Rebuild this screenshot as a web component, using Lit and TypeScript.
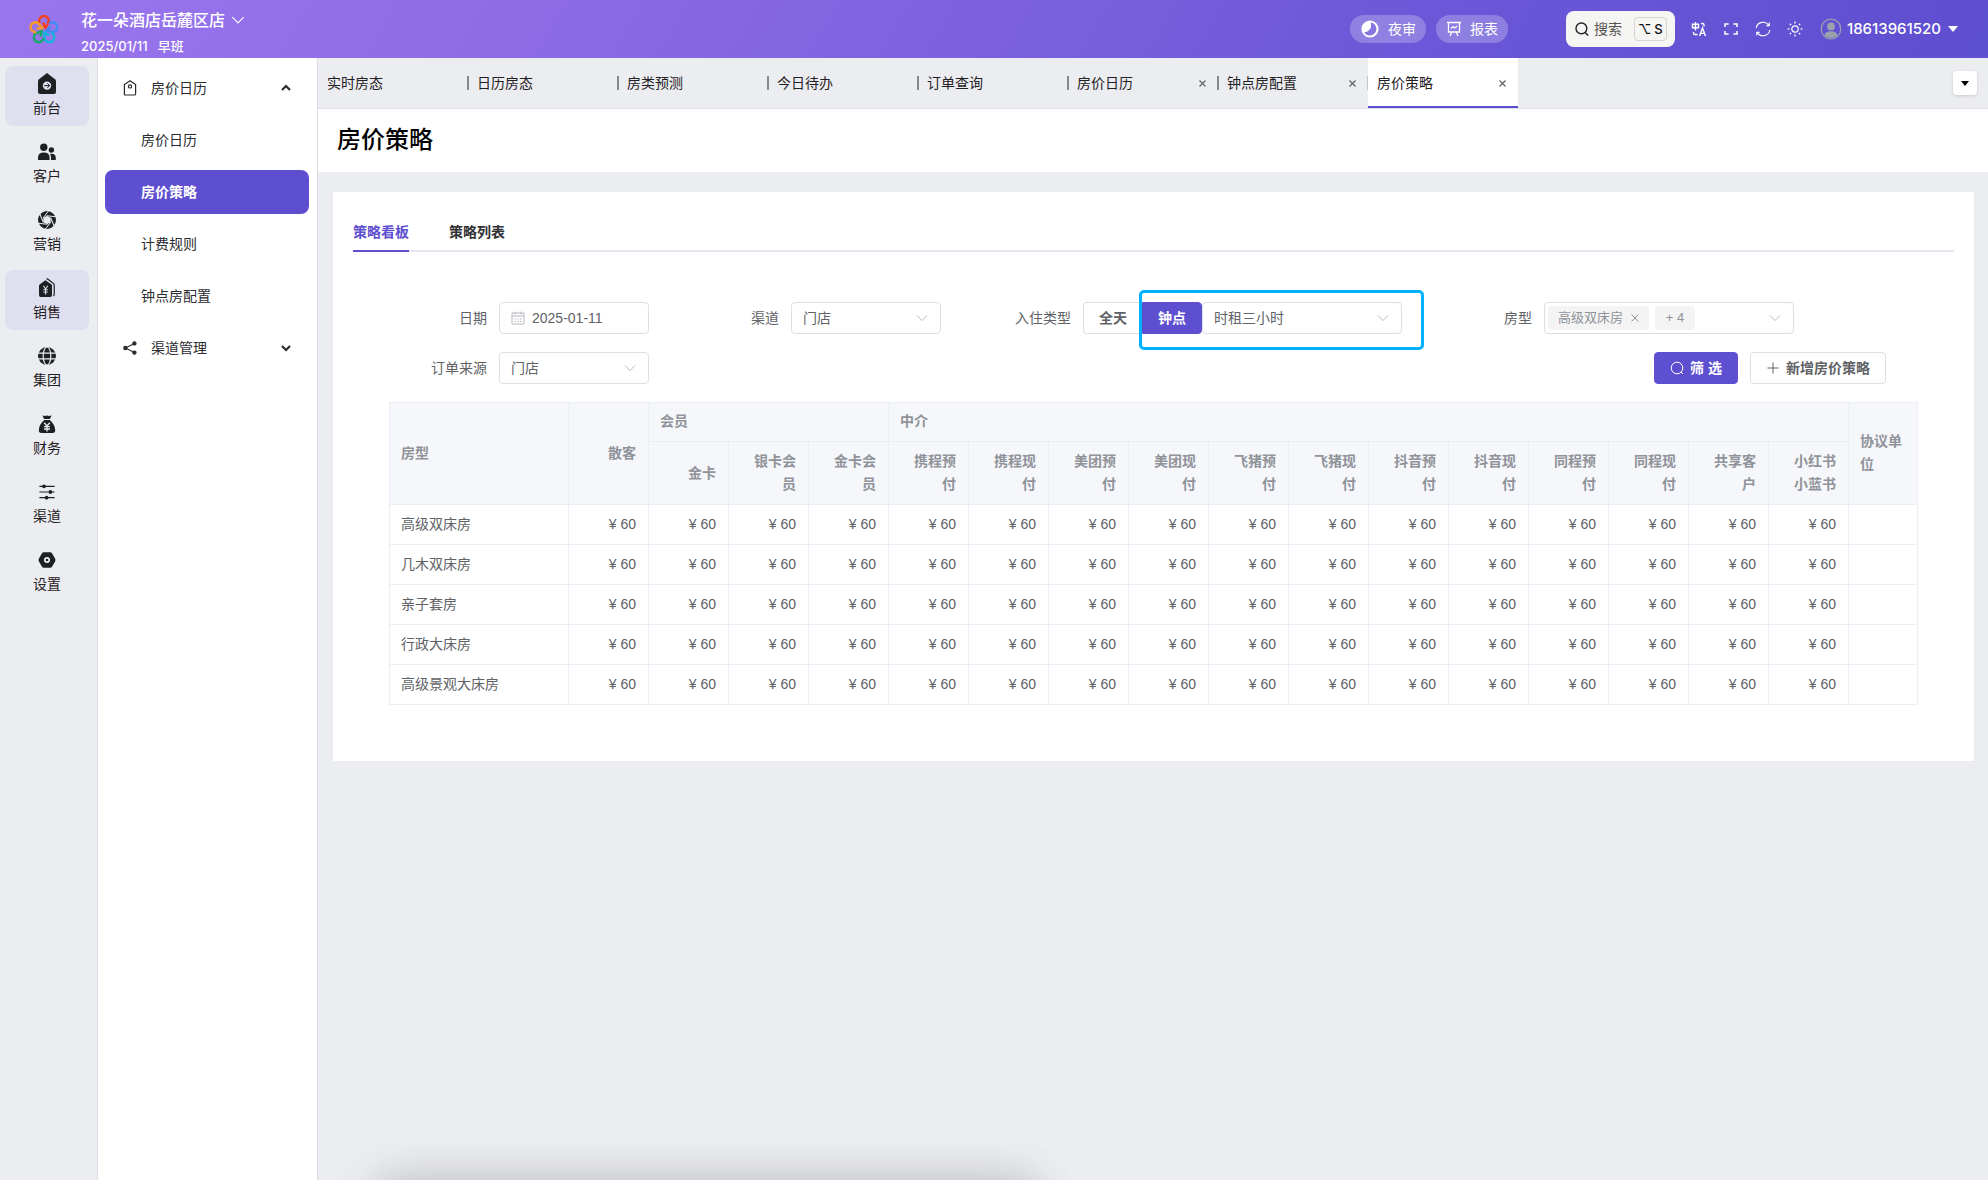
import { LitElement, html, svg, css, nothing } from "lit";
import { customElement, state } from "lit/decorators.js";
import { classMap } from "lit/directives/class-map.js";

const icon = (w: number, h: number, body: unknown, cls = "") => html`<svg
  class=${cls} width=${w} height=${h} viewBox="0 0 ${w} ${h}" fill="none" aria-hidden="true">${body}</svg>`;

const petals = ["#f4401f", "#3f8cf5", "#12b5d8", "#17a86b", "#f7982a"];
const logo = icon(32, 32, petals.map((color, i) => svg`
  <g transform="rotate(${i * 72} 16 17)">
    <path d="M11.6 10.2 A4.9 4.9 0 1 1 20.8 8.8 L17.4 15 L14.9 9.6" stroke=${color} stroke-width="2.5" stroke-linejoin="round"/>
  </g>`), "logo");

const chevron = (size: number, cls = "chevron") => html`<svg class=${cls} width=${size} height=${size}
  viewBox="0 0 14 14" fill="none" aria-hidden="true"><path d="M2 4.5 7 9.5 12 4.5" stroke="currentColor"/></svg>`;

const railIcons: Record<string, unknown> = {
  front: icon(18, 22, svg`
    <path d="M9 0 17 6.2Q18 7 18 8.2V19Q18 21 16 21H2Q0 21 0 19V8.2Q0 7 1 6.2Z" fill="currentColor"/>
    <circle cx="9" cy="12.6" r="4.2" fill="#e0dfef"/>
    <path d="M6.2 12.6h5.4M9.4 10.400l2.2 2.2-2.2 2.2" stroke="currentColor" stroke-width="1"/>`),
  guest: icon(18, 22, svg`
    <circle cx="5.8" cy="6.2" r="3.7" fill="currentColor"/>
    <path d="M0 19v-2.4Q0 11.4 5.8 11.4t5.8 5.2V19Z" fill="currentColor"/>
    <circle cx="13.4" cy="9" r="2.7" fill="currentColor"/>
    <path d="M13 19v-2.6q0-2-1-3.5Q17.8 12.2 17.8 17v2Z" fill="currentColor"/>`),
  promo: icon(18, 22, svg`
    <circle cx="9" cy="11" r="6.3" stroke="currentColor" stroke-width="5.4"/>
    ${[0, 60, 120, 180, 240, 300].map((a) => svg`<path d="M5 9.2 10.8 1.6" transform="rotate(${a} 9 11)" stroke="#ecedf1" stroke-width="1"/>`)}
    <path d="m9 7 3.4 2v4L9 15l-3.4-2V9Z" fill="#ecedf1"/>`),
  sales: icon(18, 22, svg`
    <path d="M7.4 3.2 13.6 7.6Q14 8 14 8.8V18Q14 20 12.4 20H2.8Q1 20 1 18V8.8Q1 8 1.6 7.4Z" fill="currentColor"/>
    <path d="M8.6 2.2 9.6 2l6 4.6q.6.5.6 1.4v9q0 1.6-1 2" stroke="currentColor" stroke-width="1.2"/>
    <path d="M5.4 8.8 7.6 12l2.2-3.2M7.6 12v5.4M5.4 12.8h4.4M5.4 15h4.4" stroke="#e0dfef" stroke-width="1.1"/>`),
  group: icon(18, 22, svg`
    <circle cx="9" cy="11" r="9" fill="currentColor"/>
    <path d="M0 8.2h18M0 13.8h18" stroke="#ecedf1" stroke-width="1.2"/>
    <ellipse cx="9" cy="11" rx="3.8" ry="9" stroke="#ecedf1" stroke-width="1.2"/>`),
  finance: icon(18, 22, svg`
    <path d="M4.4 2.2Q6.4 3.6 9 2.6q2.6 1 4.6-.4L12 6H6Z" fill="currentColor"/>
    <path d="M6.2 7h5.6Q16.8 11.4 17.2 17q.2 3-2.6 3H3.4Q.6 20 .8 17 1.2 11.4 6.2 7Z" fill="currentColor"/>
    <path d="M6.2 9.8 9 13l2.8-3.2M9 13v5.4M6 13.6h6M6 16h6" stroke="#ecedf1" stroke-width="1.3"/>`),
  channel: icon(18, 22, svg`
    <path d="M1.4 5.3h15.2M1.4 11h15.2M1.4 16.7h15.2" stroke="currentColor" stroke-width="1.2"/>
    <circle cx="6" cy="5.3" r="1.9" fill="currentColor"/><circle cx="12.4" cy="11" r="1.9" fill="currentColor"/>
    <circle cx="8.6" cy="16.7" r="1.9" fill="currentColor"/>`),
  settings: icon(18, 22, svg`
    <path d="M5.6 3.2h6.8q1 0 1.6 1L17.2 9.8q.6 1.200 0 2.400L14 17.800q-.6 1-1.600 1H5.600q-1 0-1.600-1L.8 12.200Q.2 11 .8 9.800L4 4.200q.6-1 1.600-1Z" fill="currentColor"/>
    <circle cx="9" cy="11" r="2.2" stroke="#ecedf1" stroke-width="1.7"/>`),
};

const rail = [
  ["front", "前台"], ["guest", "客户"], ["promo", "营销"], ["sales", "销售"],
  ["group", "集团"], ["finance", "财务"], ["channel", "渠道"], ["settings", "设置"],
];

const pageTabs = ["实时房态", "日历房态", "房类预测", "今日待办", "订单查询", "房价日历", "钟点房配置", "房价策略"];

const memberLevels = ["金卡", "银卡会员", "金卡会员"];
const agencies = ["携程预付", "携程现付", "美团预付", "美团现付", "飞猪预付", "飞猪现付",
  "抖音预付", "抖音现付", "同程预付", "同程现付", "共享客户", "小红书小蓝书"];
const priceColumns = ["散客", ...memberLevels, ...agencies];
const rooms = ["高级双床房", "几木双床房", "亲子套房", "行政大床房", "高级景观大床房"];

@customElement("app-root")
export class AppRoot extends LitElement {
  @state() private stay = "hour";
  @state() private board = 0;

  static styles = css`
    :host {
      display: flex;
      flex-direction: column;
      position: relative;
      overflow: hidden;
      min-height: 100vh;
      background: #ecedf1;
      color: #303133;
      font: 14px/22px "Liberation Sans", "Noto Sans CJK SC", sans-serif;
    }
    *, *::before, *::after { box-sizing: border-box; }
    button, input, select { font: inherit; color: inherit; margin: 0; }
    button { padding: 0; border: 0; background: none; cursor: pointer; }
    a { color: inherit; text-decoration: none; }
    svg { display: block; flex: none; }

    .header {
      display: flex;
      align-items: center;
      height: 58px;
      padding: 0 30px 0 28px;
      background: linear-gradient(120deg, #9a76ee 0%, #8e6ce6 25%, #6c58d8 70%, #5e4fd0 100%);
      color: #fff;
      font-family: Inter, "Noto Sans CJK SC", sans-serif;
    }
    .brand { margin-left: 21px; padding-top: 5px; }
    .hotel { display: flex; align-items: center; gap: 5px; font-size: 16px; font-weight: 500; line-height: 28px; }
    .shift { display: flex; gap: 10px; font-size: 13px; font-weight: 500; line-height: 24px; }
    .spacer { flex: 1; }
    .pills { display: flex; gap: 10px; margin-right: 58px; }
    .pill {
      display: flex; align-items: center; gap: 8px; height: 28px; padding: 0 10px;
      border-radius: 14px; background: rgba(255, 255, 255, .24); font-size: 14px;
    }
    .search {
      display: flex; align-items: center; height: 36px; padding: 0 8px 0 9px; border-radius: 8px;
      background: #f5f5f4; color: #57534e; font-size: 14px;
    }
    .search svg { margin-right: 5px; color: #222; }
    .kbd {
      display: flex; align-items: center; justify-content: center; gap: 3px; width: 33px; height: 24px;
      margin-left: 12px; border: 1px solid #d6d3d1; border-radius: 4px; color: #111; font-size: 13px; font-weight: 500;
    }
    .tools { display: flex; gap: 16px; margin: 0 17px 0 16px; }
    .user { display: flex; align-items: center; gap: 5px; font-size: 15px; font-weight: 500; }
    .caret { margin-left: 2px; }

    .body { display: flex; flex: 1; }
    .rail {
      display: flex; flex-direction: column; gap: 8px; width: 98px; padding: 8px 8px 8px 5px;
      border-right: 1px solid #dcdfe8; flex: none;
    }
    .rail-item {
      display: flex; flex-direction: column; align-items: center; gap: 2px; height: 60px; padding-top: 7px;
      border-radius: 8px; color: #1f2023;
    }
    .rail-item.on { background: #e0dfef; }
    .menu {
      display: flex; flex-direction: column; gap: 8px; width: 220px; flex: none; padding: 8px 8px 8px 7px;
      background: #fff; border-right: 1px solid #dcdfe8;
    }
    .menu-item { display: flex; align-items: center; height: 44px; padding-left: 36px; border-radius: 8px; color: #2b2c30; }
    .menu-item.on { background: #5e4fd0; color: #fff; font-weight: 600; }
    .menu-group { padding: 0 18px; gap: 14px; }
    .menu-group .arrow { margin-left: auto; }

    .main { flex: 1; min-width: 0; }
    .page-tabs { display: flex; align-items: center; height: 51px; border-bottom: 1px solid #dcdfe8; padding-right: 11px; }
    .page-tab {
      display: flex; align-items: center; flex: 0 1 150px; height: 50px; padding: 2px 12px 0 9px;
      color: #1f2023; border-bottom: 2px solid transparent;
    }
    .page-tab:not(:first-child)::before { content: ""; width: 2px; height: 14px; margin: 0 8px 0 -10px; background: #88898d; flex: none; }
    .page-tab.on { background: #fff; border-color: #5e4fd0; }
    .page-tab.on:not(:first-child)::before { width: 1px; margin-right: 9px; background: #c4c5c8; }
    .page-tab a { flex: 1; white-space: nowrap; }
    .close { color: #606266; }
    .more {
      display: grid; place-items: center; width: 24px; height: 24px; margin-left: auto; border-radius: 4px;
      background: #fff; box-shadow: 0 1px 3px rgba(0, 0, 0, .15); color: #000;
    }
    .title { margin: 0; padding: 15px 19px 16px; background: #fff; color: #000; font-size: 24px; font-weight: 500; line-height: 32px; }
    .content { padding: 20px 14px 0 15px; }
    .card { padding: 20px 20px 56px; background: #fff; }
    .tabs { display: flex; gap: 40px; height: 40px; border-bottom: 2px solid #e4e7ed; }
    .tab { height: 40px; padding-top: 2px; border-bottom: 2px solid transparent; font-weight: 600; }
    .tab.on { color: #5e4fd0; border-color: #5e4fd0; }

    .panel { padding: 50px 36px 0; color: #606266; }
    .filters { display: grid; grid-template-columns: 292fr 292fr 461fr 484fr; gap: 18px 0; margin-bottom: 18px; }
    .field { display: flex; align-items: center; }
    .field-label { width: 110px; padding-right: 12px; text-align: right; white-space: nowrap; flex: none; }
    .box {
      display: flex; align-items: center; width: 150px; height: 32px; border: 1px solid #dcdfe6;
      border-radius: 4px; background: #fff; position: relative;
    }
    .box input { width: 100%; height: 30px; padding: 0 7px; border: 0; outline: 0; background: none; }
    .box select {
      appearance: none; width: 100%; height: 30px; padding: 0 32px 0 11px; border: 0; outline: 0; background: none;
    }
    .box .chevron { position: absolute; right: 11px; color: #b4b8c0; pointer-events: none; }
    .date { padding-left: 11px; }
    .date svg { color: #b4b8c0; }
    .wide { width: 200px; }
    .rooms { width: 250px; gap: 6px; padding: 0 11px 0 3px; }
    .tag {
      display: flex; align-items: center; justify-content: center; gap: 8px; min-width: 40px; height: 24px;
      padding: 0 10px; border-radius: 4px; background: #f4f4f5; color: #909399; font-size: 13px; white-space: nowrap;
    }
    .rooms .open { margin-left: auto; color: #b4b8c0; }
    .rooms .chevron { position: static; }
    .radio {
      display: flex; align-items: center; position: relative; height: 32px; padding: 0 15px;
      border: 1px solid #dcdfe6; font-weight: 600; cursor: pointer;
    }
    .radio input { position: absolute; inset: 0; margin: 0; opacity: 0; }
    .radio.first { border-right: 0; border-radius: 4px 0 0 4px; }
    .radio.last { border-radius: 0 4px 4px 0; }
    .radio.on { background: #5e4fd0; border-color: #5e4fd0; color: #fff; }
    .marked { display: flex; position: relative; }
    .marked::after {
      content: ""; position: absolute; inset: -12px -22px -16px -3px; border: 3px solid #00b2ff;
      border-radius: 5px; pointer-events: none;
    }
    .actions { display: flex; grid-column: 2 / -1; justify-content: flex-end; gap: 12px; padding-right: 32px; }
    .btn {
      display: flex; align-items: center; gap: 6px; height: 32px; padding: 0 15px;
      border: 1px solid #dcdfe6; border-radius: 4px; background: #fff; font-weight: 600;
    }
    .btn.primary { background: #5e4fd0; border-color: #5e4fd0; color: #fff; }

    .grid {
      width: 100%; table-layout: fixed; border-spacing: 0; border: solid #ebeef5; border-width: 1px 0 0 1px;
      line-height: 23px;
    }
    .grid th, .grid td {
      padding: 8px 12px; border: solid #ebeef5; border-width: 0 1px 1px 0; text-align: right; vertical-align: middle;
    }
    .grid th { background: #f5f7fa; color: #909399; font-weight: 600; }
    .grid .band th { padding-top: 7px; }
    .grid .left, .grid tbody th { padding-left: 11px; text-align: left; }
    .grid tbody th { background: #fff; color: #606266; font-weight: 400; }
    .col-room { width: 179px; }
    .col-price { width: 80px; }

    .dock-shadow {
      position: absolute; top: 100%; left: 19%; width: 33%; height: 60px;
      box-shadow: 0 0 40px rgba(0, 0, 0, .18), 0 6px 80px rgba(0, 0, 0, .06);
    }
  `;

  private renderHeader() {
    return html`
      <header class="header">
        ${logo}
        <div class="brand">
          <button class="hotel">花一朵酒店岳麓区店 ${chevron(16, "")}</button>
          <div class="shift">2025/01/11 <span>早班</span></div>
        </div>
        <div class="spacer"></div>
        <div class="pills">
          <button class="pill">
            ${icon(20, 20, svg`<circle cx="10" cy="10" r="8.600" fill="#fff"/>
              <path d="M10.400 3.400A6.600 6.600 0 1 1 4 13.200 6.800 6.800 0 0 0 10.400 3.400Z" fill="#8577de"/>
              <path d="M10.200 3.200Q12 8.600 4.200 13.400A6.700 6.700 0 0 1 10.200 3.200Z" fill="#fff"/>`)}夜审
          </button>
          <button class="pill">
            ${icon(16, 18, svg`<path d="M1 2.500h14M2.500 2.500v9.500h11V2.500M6 12l-2 4M10 12l2 4M5 8.500l2-2 1.800 1.400L11 6" stroke="#fff" stroke-width="1.300"/>`)}报表
          </button>
        </div>
        <button class="search">
          ${icon(14, 14, svg`<circle cx="6.400" cy="6.400" r="5.400" stroke="currentColor" stroke-width="1.400"/><path d="m10.200 10.400 3 3.200" stroke="currentColor" stroke-width="1.400"/>`)}
          搜索<span class="kbd"><span>⌥</span><span>S</span></span>
        </button>
        <div class="tools">
          <button aria-label="语言">${icon(16, 16, svg`<path d="M1.500 3.200h6v3.600h-6zM4.500 1v8.400M10 2.500h1.500q1.500 0 1.500 1.500v1.500M2.500 11v1q0 1.500 1.500 1.500h2.500M8.600 15l2.900-8 2.900 8M9.600 12.400h3.800" stroke="#fff" stroke-width="1.400"/>`)}</button>
          <button aria-label="全屏">${icon(16, 16, svg`<path d="M2 6V3h3.600M10.400 3H14v3M14 10v3h-3.600M5.600 13H2v-3" stroke="#fff" stroke-width="1.500"/>`)}</button>
          <button aria-label="刷新">${icon(16, 16, svg`<path d="M1.200 7A6.800 6.800 0 0 1 13.800 4.600M14.800 9A6.800 6.800 0 0 1 2.200 11.400M14.200 1.600v3.200H11M1.800 14.400v-3.200H5" stroke="#fff" stroke-width="1.100"/>`)}</button>
          <button aria-label="主题">${icon(16, 16, svg`<circle cx="8" cy="8" r="3.200" stroke="#fff" stroke-width="1.200"/>${[0, 45, 90, 135, 180, 225, 270, 315].map((a) => svg`<path d="M8 .6v1.800" transform="rotate(${a} 8 8)" stroke="#fff" stroke-width="1.300"/>`)}`)}</button>
        </div>
        <button class="user">
          ${icon(22, 22, svg`<circle cx="11" cy="11" r="9.800" stroke="#9a9db0" stroke-width="1.300"/>
            <circle cx="11" cy="8.400" r="3.900" fill="#9aa0ac"/><path d="M4.400 17.200Q5.500 13.200 11 13.200t6.600 4A9.200 9.200 0 0 1 4.400 17.200Z" fill="#9aa0ac"/>`)}
          18613961520
          ${icon(10, 6, svg`<path d="M0 0h10L5 6Z" fill="#fff"/>`, "caret")}
        </button>
      </header>`;
  }

  private renderMenu() {
    const item = (name: string, on = false) =>
      html`<a class="menu-item ${on ? "on" : ""}" href="#">${name}</a>`;
    return html`
      <nav class="rail">
        ${rail.map(([key, name], i) => html`<a href="#" class=${classMap({ "rail-item": true, on: i === 0 || i === 3 })}>${railIcons[key]}${name}</a>`)}
      </nav>
      <nav class="menu">
        <button class="menu-item menu-group">
          ${icon(14, 16, svg`<path d="M7 .8 12.600 4.600V14q0 1-1 1H2.400q-1 0-1-1V4.600Z" stroke="currentColor" stroke-width="1.200"/><circle cx="7" cy="6.400" r="1.600" stroke="currentColor" stroke-width="1.200"/>`)}
          房价日历
          ${icon(10, 8, svg`<path d="M1 6 5 2l4 4" stroke="currentColor" stroke-width="2.200"/>`, "arrow")}
        </button>
        ${item("房价日历")}${item("房价策略", true)}${item("计费规则")}${item("钟点房配置")}
        <button class="menu-item menu-group">
          ${icon(14, 16, svg`<path d="M11.400 3.400 2.400 8l9 4.400" stroke="currentColor" stroke-width="1.100"/><circle cx="2.400" cy="8" r="2.200" fill="currentColor"/><circle cx="11.400" cy="3.400" r="2.200" fill="currentColor"/><circle cx="11.400" cy="12.600" r="2.200" fill="currentColor"/>`)}
          渠道管理
          ${icon(10, 8, svg`<path d="m1 2 4 4 4-4" stroke="currentColor" stroke-width="2.200"/>`, "arrow")}
        </button>
      </nav>`;
  }

  private renderFilters() {
    return html`
      <form class="filters" @submit=${(e: Event) => e.preventDefault()}>
        <div class="field">
          <label class="field-label" for="date">日期</label>
          <div class="box date">
            ${icon(14, 14, svg`<path d="M1 2h12v11H1zM1 5h12M4 .500v3M10 .500v3" stroke="currentColor"/><path d="M3.500 8h1.500M6.300 8h1.500M9 8h1.500M3.500 10.500h1.500M6.300 10.500h1.500M9 10.500h1.500" stroke="currentColor"/>`)}
            <input id="date" type="text" value="2025-01-11" />
          </div>
        </div>
        <div class="field">
          <label class="field-label" for="channel">渠道</label>
          <div class="box"><select id="channel"><option>门店</option></select>${chevron(14)}</div>
        </div>
        <div class="field">
          <label class="field-label" for="duration">入住类型</label>
          <label class=${classMap({ radio: true, first: true, on: this.stay === "day" })}>
            <input type="radio" name="stay" .checked=${this.stay === "day"} @change=${() => (this.stay = "day")} />全天
          </label>
          <div class="marked">
            <label class=${classMap({ radio: true, last: true, on: this.stay === "hour" })}>
              <input type="radio" name="stay" .checked=${this.stay === "hour"} @change=${() => (this.stay = "hour")} />钟点
            </label>
            <div class="box wide"><select id="duration"><option>时租三小时</option></select>${chevron(14)}</div>
          </div>
        </div>
        <div class="field">
          <label class="field-label" for="rooms">房型</label>
          <div class="box rooms">
            <span class="tag">高级双床房<button type="button" aria-label="移除">${icon(8, 8, svg`<path d="m.500.500 7 7m0-7-7 7" stroke="currentColor"/>`)}</button></span>
            <span class="tag">+ 4</span>
            <button class="open" id="rooms" type="button">${chevron(14)}</button>
          </div>
        </div>
        <div class="field">
          <label class="field-label" for="source">订单来源</label>
          <div class="box"><select id="source"><option>门店</option></select>${chevron(14)}</div>
        </div>
        <div class="actions">
          <button class="btn primary" type="submit">
            ${icon(14, 14, svg`<circle cx="7" cy="7" r="5.800" stroke="currentColor"/><path d="m11 11 2 2" stroke="currentColor"/>`)}筛 选
          </button>
          <button class="btn" type="button">
            ${icon(14, 14, svg`<path d="M7 1.500v11M1.500 7h11" stroke="currentColor"/>`)}新增房价策略
          </button>
        </div>
      </form>`;
  }

  private renderTable() {
    return html`
      <table class="grid">
        <colgroup>
          <col class="col-room" />
          ${priceColumns.map(() => html`<col class="col-price" />`)}
          <col />
        </colgroup>
        <thead>
          <tr class="band">
            <th class="left" rowspan="2">房型</th>
            <th rowspan="2">散客</th>
            <th class="left" colspan="3">会员</th>
            <th class="left" colspan="12">中介</th>
            <th class="left" rowspan="2">协议单位</th>
          </tr>
          <tr>${[...memberLevels, ...agencies].map((name) => html`<th>${name}</th>`)}</tr>
        </thead>
        <tbody>
          ${rooms.map((room) => html`<tr><th scope="row">${room}</th>${priceColumns.map(() => html`<td>¥ 60</td>`)}<td></td></tr>`)}
        </tbody>
      </table>`;
  }

  render() {
    return html`
      ${this.renderHeader()}
      <div class="body">
        ${this.renderMenu()}
        <main class="main">
          <nav class="page-tabs">
            ${pageTabs.map((name, i) => html`
              <div class=${classMap({ "page-tab": true, on: i === 7 })}>
                <a href="#">${name}</a>
                ${i > 4 ? html`<button class="close" aria-label="关闭">${icon(7, 7, svg`<path d="m.500.500 6 6m0-6-6 6" stroke="currentColor" stroke-width="1.200"/>`)}</button>` : nothing}
              </div>`)}
            <button class="more" aria-label="更多">${icon(8, 5, svg`<path d="M0 0h8L4 5Z" fill="currentColor"/>`)}</button>
          </nav>
          <h1 class="title">房价策略</h1>
          <div class="content">
            <section class="card">
              <div class="tabs" role="tablist">
                ${["策略看板", "策略列表"].map((name, i) => html`
                  <button role="tab" class=${classMap({ tab: true, on: this.board === i })} @click=${() => (this.board = i)}>${name}</button>`)}
              </div>
              <div class="panel">${this.renderFilters()}${this.renderTable()}</div>
            </section>
          </div>
        </main>
      </div>
      <div class="dock-shadow"></div>`;
  }
}
